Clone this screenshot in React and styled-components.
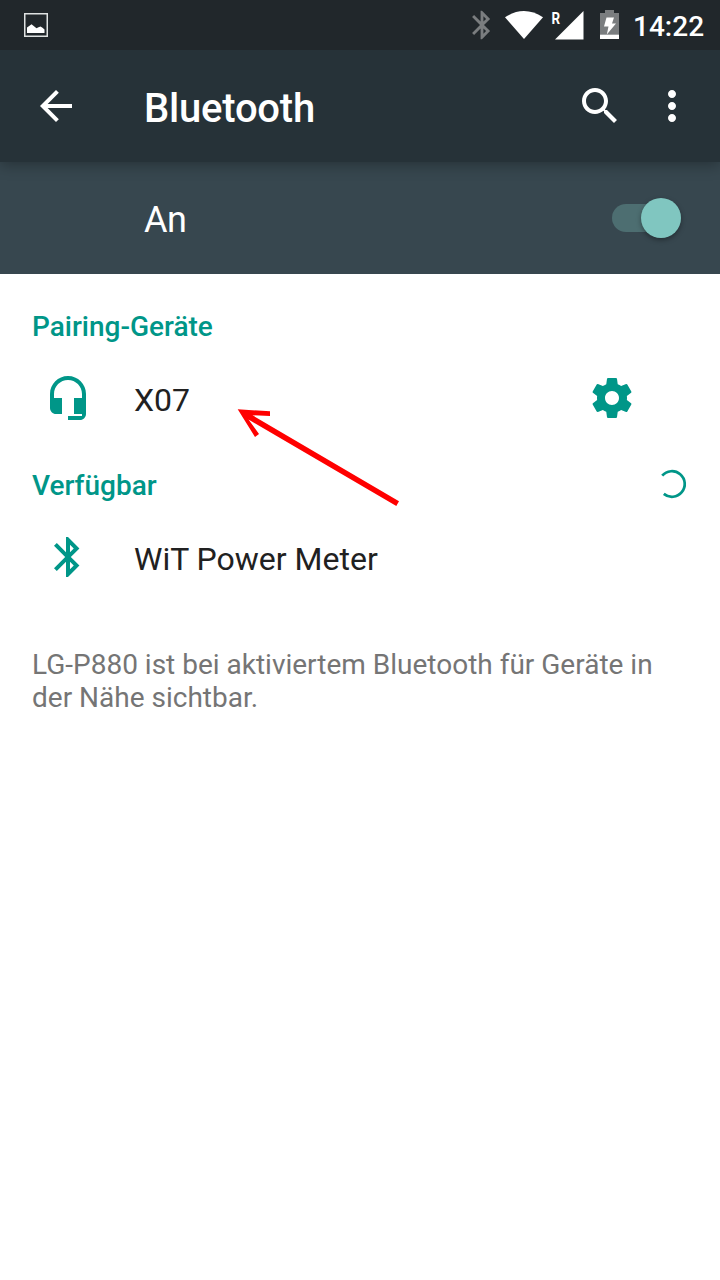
import styled, { createGlobalStyle } from "styled-components";

const GlobalStyle = createGlobalStyle`
  * {
    box-sizing: border-box;
  }
  body {
    margin: 0;
    background: #fff;
    font-family: Roboto, "Noto Sans", sans-serif;
  }
  svg {
    display: block;
    flex-shrink: 0;
  }
`;

const Screen = styled.div`
  position: relative;
  width: 720px;
  height: 1280px;
  overflow: hidden;
  background: #fff;
`;

const StatusBar = styled.div`
  position: relative;
  z-index: 1;
  display: flex;
  justify-content: space-between;
  align-items: center;
  height: 50px;
  padding: 0 16px 0 24px;
  background: #21272b;
`;

const StatusIcons = styled.div`
  display: flex;
  align-items: center;
`;

const Clock = styled.time`
  width: 71px;
  margin-left: 13px;
  padding-top: 3px;
  font-size: 28px;
  font-weight: 500;
  line-height: 32px;
  text-align: right;
  color: #fff;
`;

const Toolbar = styled.header`
  position: relative;
  display: flex;
  align-items: center;
  height: 112px;
  padding: 0 24px 0 32px;
  background: #263238;
  box-shadow: 0 3px 14px rgba(0, 0, 0, 0.3);
`;

const Title = styled.h1`
  flex: 1;
  margin: 0;
  padding: 5px 0 0 64px;
  font-size: 40px;
  font-weight: 500;
  line-height: 49px;
  letter-spacing: -0.22px;
  color: #fff;
`;

const Actions = styled.div`
  display: flex;
  gap: 24px;
`;

const SwitchBar = styled.div`
  display: flex;
  justify-content: space-between;
  align-items: center;
  height: 112px;
  padding: 0 39px 0 144px;
  background: #37474f;
`;

const SwitchLabel = styled.span`
  padding-top: 4px;
  font-size: 36px;
  line-height: 44px;
  letter-spacing: -0.5px;
  color: #fff;
`;

const Track = styled.div`
  display: flex;
  justify-content: flex-end;
  align-items: center;
  width: 69px;
  height: 28px;
  border-radius: 14px;
  background: #4d6e71;
`;

const Thumb = styled.div`
  width: 40px;
  height: 40px;
  border-radius: 50%;
  background: #80c6c0;
  box-shadow: 0 2px 5px rgba(0, 0, 0, 0.35);
`;

const Content = styled.main`
  display: flex;
  flex-direction: column;
  gap: 15px;
  padding: 20px 0 0;
`;

const SectionHeader = styled.div`
  display: flex;
  justify-content: space-between;
  align-items: center;
  height: 64px;
  padding: 0 33px 2px 32px;
`;

const SectionTitle = styled.h2`
  margin: 0;
  padding-top: 4px;
  font-size: 28px;
  font-weight: 500;
  line-height: 32px;
  color: #009688;
`;

const Device = styled.div`
  display: flex;
  align-items: center;
  height: 80px;
  padding: 0 84px 0 44px;
`;

const DeviceName = styled.span`
  flex: 1;
  padding: 4px 0 0 42px;
  font-size: 32px;
  line-height: 38px;
  color: #212121;
`;

const Note = styled.p`
  width: 656px;
  margin: 36px 32px 0;
  font-size: 28px;
  line-height: 33px;
  color: #757575;
`;

const Pointer = styled.svg`
  position: absolute;
  top: 400px;
  left: 230px;
`;

const paths = {
  back: "M20 11H7.83l5.59-5.59L12 4l-8 8 8 8 1.41-1.41L7.83 13H20v-2z",
  search:
    "M15.5 14h-.79l-.28-.27C15.41 12.59 16 11.11 16 9.5 16 5.91 13.09 3 9.5 3S3 5.91 3 9.5 5.91 16 9.5 16c1.61 0 3.09-.59 4.23-1.57l.27.28v.79l5 4.99L20.49 19l-4.99-5zm-6 0C7.01 14 5 11.99 5 9.5S7.01 5 9.5 5 14 7.01 14 9.5 11.99 14 9.5 14z",
  more: "M12 8c1.1 0 2-.9 2-2s-.9-2-2-2-2 .9-2 2 .9 2 2 2zm0 2c-1.1 0-2 .9-2 2s.9 2 2 2 2-.9 2-2-.9-2-2-2zm0 6c-1.1 0-2 .9-2 2s.9 2 2 2 2-.9 2-2-.9-2-2-2z",
  headset:
    "M12 1c-4.97 0-9 4.03-9 9v7c0 1.66 1.34 3 3 3h3v-8H5v-2c0-3.87 3.13-7 7-7s7 3.13 7 7v2h-4v8h4v1h-7v2h6c1.66 0 3-1.34 3-3V10c0-4.97-4.03-9-9-9z",
  bluetooth:
    "M17.71 7.71L12 2h-1v7.59L6.41 5 5 6.41 10.59 12 5 17.59 6.41 19 11 14.41V22h1l5.71-5.71-4.3-4.29 4.3-4.29zM13 5.83l1.88 1.88L13 9.59V5.83zm1.88 10.46L13 18.17v-3.76l1.88 1.88z",
  settings:
    "M19.43 12.98c.04-.32.07-.64.07-.98s-.03-.66-.07-.98l2.11-1.65c.19-.15.24-.42.12-.64l-2-3.46c-.12-.22-.39-.3-.61-.22l-2.49 1c-.52-.4-1.08-.73-1.69-.98l-.38-2.65C14.46 2.18 14.25 2 14 2h-4c-.25 0-.46.18-.49.42l-.38 2.65c-.61.25-1.17.59-1.69.98l-2.49-1c-.23-.09-.49 0-.61.22l-2 3.46c-.13.22-.07.49.12.64l2.11 1.65c-.04.32-.07.65-.07.98s.03.66.07.98l-2.11 1.65c-.19.15-.24.42-.12.64l2 3.46c.12.22.39.3.61.22l2.49-1c.52.4 1.08.73 1.69.98l.38 2.65c.03.24.24.42.49.42h4c.25 0 .46-.18.49-.42l.38-2.65c.61-.25 1.17-.59 1.69-.98l2.49 1c.23.09.49 0 .61-.22l2-3.46c.12-.22.07-.49-.12-.64l-2.11-1.65zM12 15.5c-1.93 0-3.5-1.57-3.5-3.5s1.57-3.5 3.5-3.5 3.5 1.57 3.5 3.5-1.57 3.5-3.5 3.5z",
};

function Icon({ name, size = 48, color = "#009688" }) {
  return (
    <svg width={size} height={size} viewBox="0 0 24 24" fill={color}>
      <path d={paths[name]} />
    </svg>
  );
}

function PictureIcon() {
  return (
    <svg width="24" height="24" viewBox="0 0 24 24">
      <rect x="0.75" y="0.75" width="22.5" height="22.5" fill="none" stroke="#dfe2e2" strokeWidth="1.5" />
      <path d="M3 20v-5.5l2.5-1.8 2-1.5 2.5 2 2.5 2 2-.9 2-.8 2 1.3 2 1.7V20z" fill="#fff" />
    </svg>
  );
}

// Wi-Fi fan, roaming signal and charging battery
function SignalIcons() {
  return (
    <svg width="121" height="50" viewBox="499 0 121 50">
      <path d="M505 17.2Q524 5 543 17.2L524 39z" fill="#fff" />
      <text x="551.6" y="23.8" fontSize="17" fontWeight="700" fill="#fff" textLength="8.6" lengthAdjust="spacingAndGlyphs">
        R
      </text>
      <path d="M583.5 11v28.5H555z" fill="#fff" />
      <path d="M605 10h9v3h5v26h-19V13h5z" fill="#7a7d7f" />
      <path d="M600 34.7h19V39h-19z" fill="#fff" />
      <path d="M606.5 17.5h7.5l-2 6h4l-9.2 11 1.7-8H604z" fill="#fff" />
    </svg>
  );
}

function Spinner() {
  return (
    <svg width="30" height="30" viewBox="0 0 30 30">
      <path d="M5.2 6.7a12.8 12.8 0 1 1 1.6 18.2" fill="none" stroke="#009688" strokeWidth="2.7" />
    </svg>
  );
}

function App() {
  return (
    <Screen>
      <GlobalStyle />
      <StatusBar>
        <PictureIcon />
        <StatusIcons>
          <Icon name="bluetooth" size={34} color="#7a7d7f" />
          <SignalIcons />
          <Clock>14:22</Clock>
        </StatusIcons>
      </StatusBar>
      <Toolbar>
        <Icon name="back" color="#fff" />
        <Title>Bluetooth</Title>
        <Actions>
          <Icon name="search" color="#fff" />
          <Icon name="more" color="#fff" />
        </Actions>
      </Toolbar>
      <SwitchBar>
        <SwitchLabel>An</SwitchLabel>
        <Track>
          <Thumb />
        </Track>
      </SwitchBar>
      <Content>
        <section>
          <SectionHeader>
            <SectionTitle>Pairing-Geräte</SectionTitle>
          </SectionHeader>
          <Device>
            <Icon name="headset" />
            <DeviceName>X07</DeviceName>
            <Icon name="settings" />
          </Device>
        </section>
        <section>
          <SectionHeader>
            <SectionTitle>Verfügbar</SectionTitle>
            <Spinner />
          </SectionHeader>
          <Device>
            <Icon name="bluetooth" />
            <DeviceName>WiT Power Meter</DeviceName>
          </Device>
        </section>
        <Note>LG-P880 ist bei aktiviertem Bluetooth für Geräte in der Nähe sichtbar.</Note>
      </Content>
      <Pointer width="180" height="112" viewBox="230 400 180 112" fill="#f00">
        <path d="M237.7 409.2L270 411.3V416L252.5 415.3 399 501.3 396.3 506 248.5 419.5 259 434 255 437z" />
      </Pointer>
    </Screen>
  );
}

export default App;
